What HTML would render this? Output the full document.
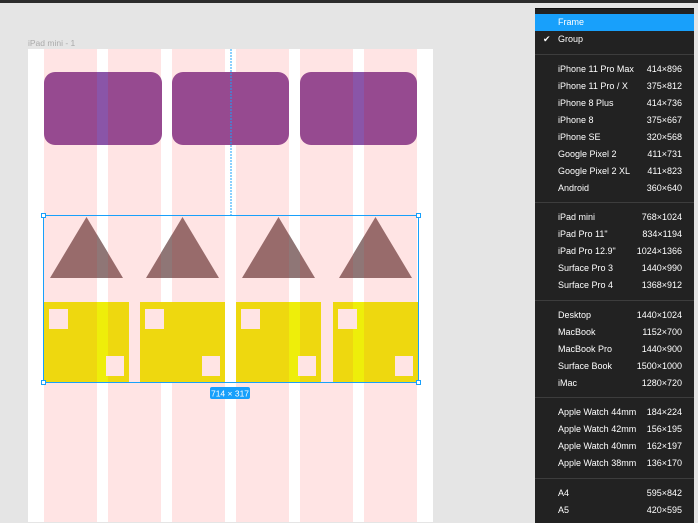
<!DOCTYPE html>
<html><head><meta charset="utf-8"><style>
html,body{margin:0;padding:0;width:698px;height:522px;overflow:hidden;background:#e5e5e5;font-family:"Liberation Sans",sans-serif}
.menu{position:absolute;left:535px;top:8px;width:159px;height:514px;background:#222;border-top:1px solid #111}
.it{position:absolute;left:0;width:159px;height:17px;line-height:17px;font-size:9px;color:#fff}
.it .l{position:absolute;left:23px}
.it .r{position:absolute;right:12px}
.sep{position:absolute;left:0;width:159px;height:1px;background:#3d3d3d}
</style></head><body>
<div style="position:absolute;left:0;top:0;width:698px;height:3px;background:#2c2c2c"></div>
<div style="position:absolute;left:28px;top:38px;font-size:8.5px;color:#aaa">iPad mini - 1</div>
<svg style="position:absolute;left:0;top:0" width="698" height="522">
<defs>
<clipPath id="g"><rect x="97" y="0" width="11" height="522"/><rect x="161" y="0" width="11" height="522"/><rect x="225" y="0" width="11" height="522"/><rect x="289" y="0" width="11" height="522"/><rect x="353" y="0" width="11" height="522"/></clipPath>
</defs>
<rect x="28" y="49" width="405" height="473" fill="#fff"/>
<g fill="#ffe4e4">
<rect x="44" y="49" width="53" height="473"/><rect x="108" y="49" width="53" height="473"/><rect x="172" y="49" width="53" height="473"/><rect x="236" y="49" width="53" height="473"/><rect x="300" y="49" width="53" height="473"/><rect x="364" y="49" width="53" height="473"/>
</g>
<rect x="44" y="72" width="118" height="73" rx="11" fill="#964a90"/>
<rect x="172" y="72" width="117" height="73" rx="11" fill="#964a90"/>
<rect x="300" y="72" width="117" height="73" rx="11" fill="#964a90"/>
<rect x="97" y="72" width="11" height="73" fill="#8a55a8"/>
<rect x="353" y="72" width="11" height="73" fill="#8a55a8"/>
<line x1="231" y1="49" x2="231" y2="215" stroke="#18a0fb" stroke-width="1" stroke-dasharray="2,1"/>
<g fill="#986b6b">
<polygon points="86.5,217 123,278 50,278"/><polygon points="182.5,217 219,278 146,278"/><polygon points="278.5,217 315,278 242,278"/><polygon points="375.5,217 412,278 339,278"/>
</g>
<g fill="#8f7676" clip-path="url(#g)">
<polygon points="86.5,217 123,278 50,278"/><polygon points="182.5,217 219,278 146,278"/><polygon points="278.5,217 315,278 242,278"/><polygon points="375.5,217 412,278 339,278"/>
</g>
<g fill="#eed80f">
<rect x="43" y="302" width="86" height="80"/><rect x="140" y="302" width="85" height="80"/><rect x="236" y="302" width="85" height="80"/><rect x="333" y="302" width="85" height="80"/>
</g>
<g fill="#eeee0a">
<rect x="97" y="302" width="11" height="80"/><rect x="289" y="302" width="11" height="80"/><rect x="353" y="302" width="11" height="80"/>
</g>
<g fill="#ffe4e4">
<rect x="49" y="309" width="19" height="20"/><rect x="145" y="309" width="19" height="20"/><rect x="241" y="309" width="19" height="20"/><rect x="338" y="309" width="19" height="20"/>
<rect x="106" y="356" width="18" height="20"/><rect x="202" y="356" width="18" height="20"/><rect x="298" y="356" width="18" height="20"/><rect x="395" y="356" width="18" height="20"/>
</g>
<rect x="43.5" y="215.5" width="375" height="167" fill="none" stroke="#18a0fb" stroke-width="1"/>
<g fill="#fff" stroke="#18a0fb" stroke-width="1">
<rect x="41.5" y="213.5" width="4" height="4"/><rect x="416.5" y="213.5" width="4" height="4"/><rect x="41.5" y="380.5" width="4" height="4"/><rect x="416.5" y="380.5" width="4" height="4"/>
</g>
<rect x="210" y="387" width="40" height="12" rx="2" fill="#18a0fb"/>
<text x="230" y="396.5" font-size="8.5" fill="#fff" text-anchor="middle" font-family="Liberation Sans">714 × 317</text>
</svg>
<div class="menu">
<div class="it" style="top:5px;background:#18a0fb;height:17px"><span class="l">Frame</span></div>
<div class="it" style="top:22px"><span style="position:absolute;left:8px">✔</span><span class="l">Group</span></div>
<div class="sep" style="top:45px"></div>
<div class="it" style="top:52px"><span class="l">iPhone 11 Pro Max</span><span class="r">414×896</span></div>
<div class="it" style="top:69px"><span class="l">iPhone 11 Pro / X</span><span class="r">375×812</span></div>
<div class="it" style="top:86px"><span class="l">iPhone 8 Plus</span><span class="r">414×736</span></div>
<div class="it" style="top:103px"><span class="l">iPhone 8</span><span class="r">375×667</span></div>
<div class="it" style="top:120px"><span class="l">iPhone SE</span><span class="r">320×568</span></div>
<div class="it" style="top:137px"><span class="l">Google Pixel 2</span><span class="r">411×731</span></div>
<div class="it" style="top:154px"><span class="l">Google Pixel 2 XL</span><span class="r">411×823</span></div>
<div class="it" style="top:171px"><span class="l">Android</span><span class="r">360×640</span></div>
<div class="sep" style="top:193px"></div>
<div class="it" style="top:200px"><span class="l">iPad mini</span><span class="r">768×1024</span></div>
<div class="it" style="top:217px"><span class="l">iPad Pro 11"</span><span class="r">834×1194</span></div>
<div class="it" style="top:234px"><span class="l">iPad Pro 12.9"</span><span class="r">1024×1366</span></div>
<div class="it" style="top:251px"><span class="l">Surface Pro 3</span><span class="r">1440×990</span></div>
<div class="it" style="top:268px"><span class="l">Surface Pro 4</span><span class="r">1368×912</span></div>
<div class="sep" style="top:291px"></div>
<div class="it" style="top:298px"><span class="l">Desktop</span><span class="r">1440×1024</span></div>
<div class="it" style="top:315px"><span class="l">MacBook</span><span class="r">1152×700</span></div>
<div class="it" style="top:332px"><span class="l">MacBook Pro</span><span class="r">1440×900</span></div>
<div class="it" style="top:349px"><span class="l">Surface Book</span><span class="r">1500×1000</span></div>
<div class="it" style="top:366px"><span class="l">iMac</span><span class="r">1280×720</span></div>
<div class="sep" style="top:388px"></div>
<div class="it" style="top:395px"><span class="l">Apple Watch 44mm</span><span class="r">184×224</span></div>
<div class="it" style="top:412px"><span class="l">Apple Watch 42mm</span><span class="r">156×195</span></div>
<div class="it" style="top:429px"><span class="l">Apple Watch 40mm</span><span class="r">162×197</span></div>
<div class="it" style="top:446px"><span class="l">Apple Watch 38mm</span><span class="r">136×170</span></div>
<div class="sep" style="top:469px"></div>
<div class="it" style="top:476px"><span class="l">A4</span><span class="r">595×842</span></div>
<div class="it" style="top:493px"><span class="l">A5</span><span class="r">420×595</span></div>
</div>
</body></html>
